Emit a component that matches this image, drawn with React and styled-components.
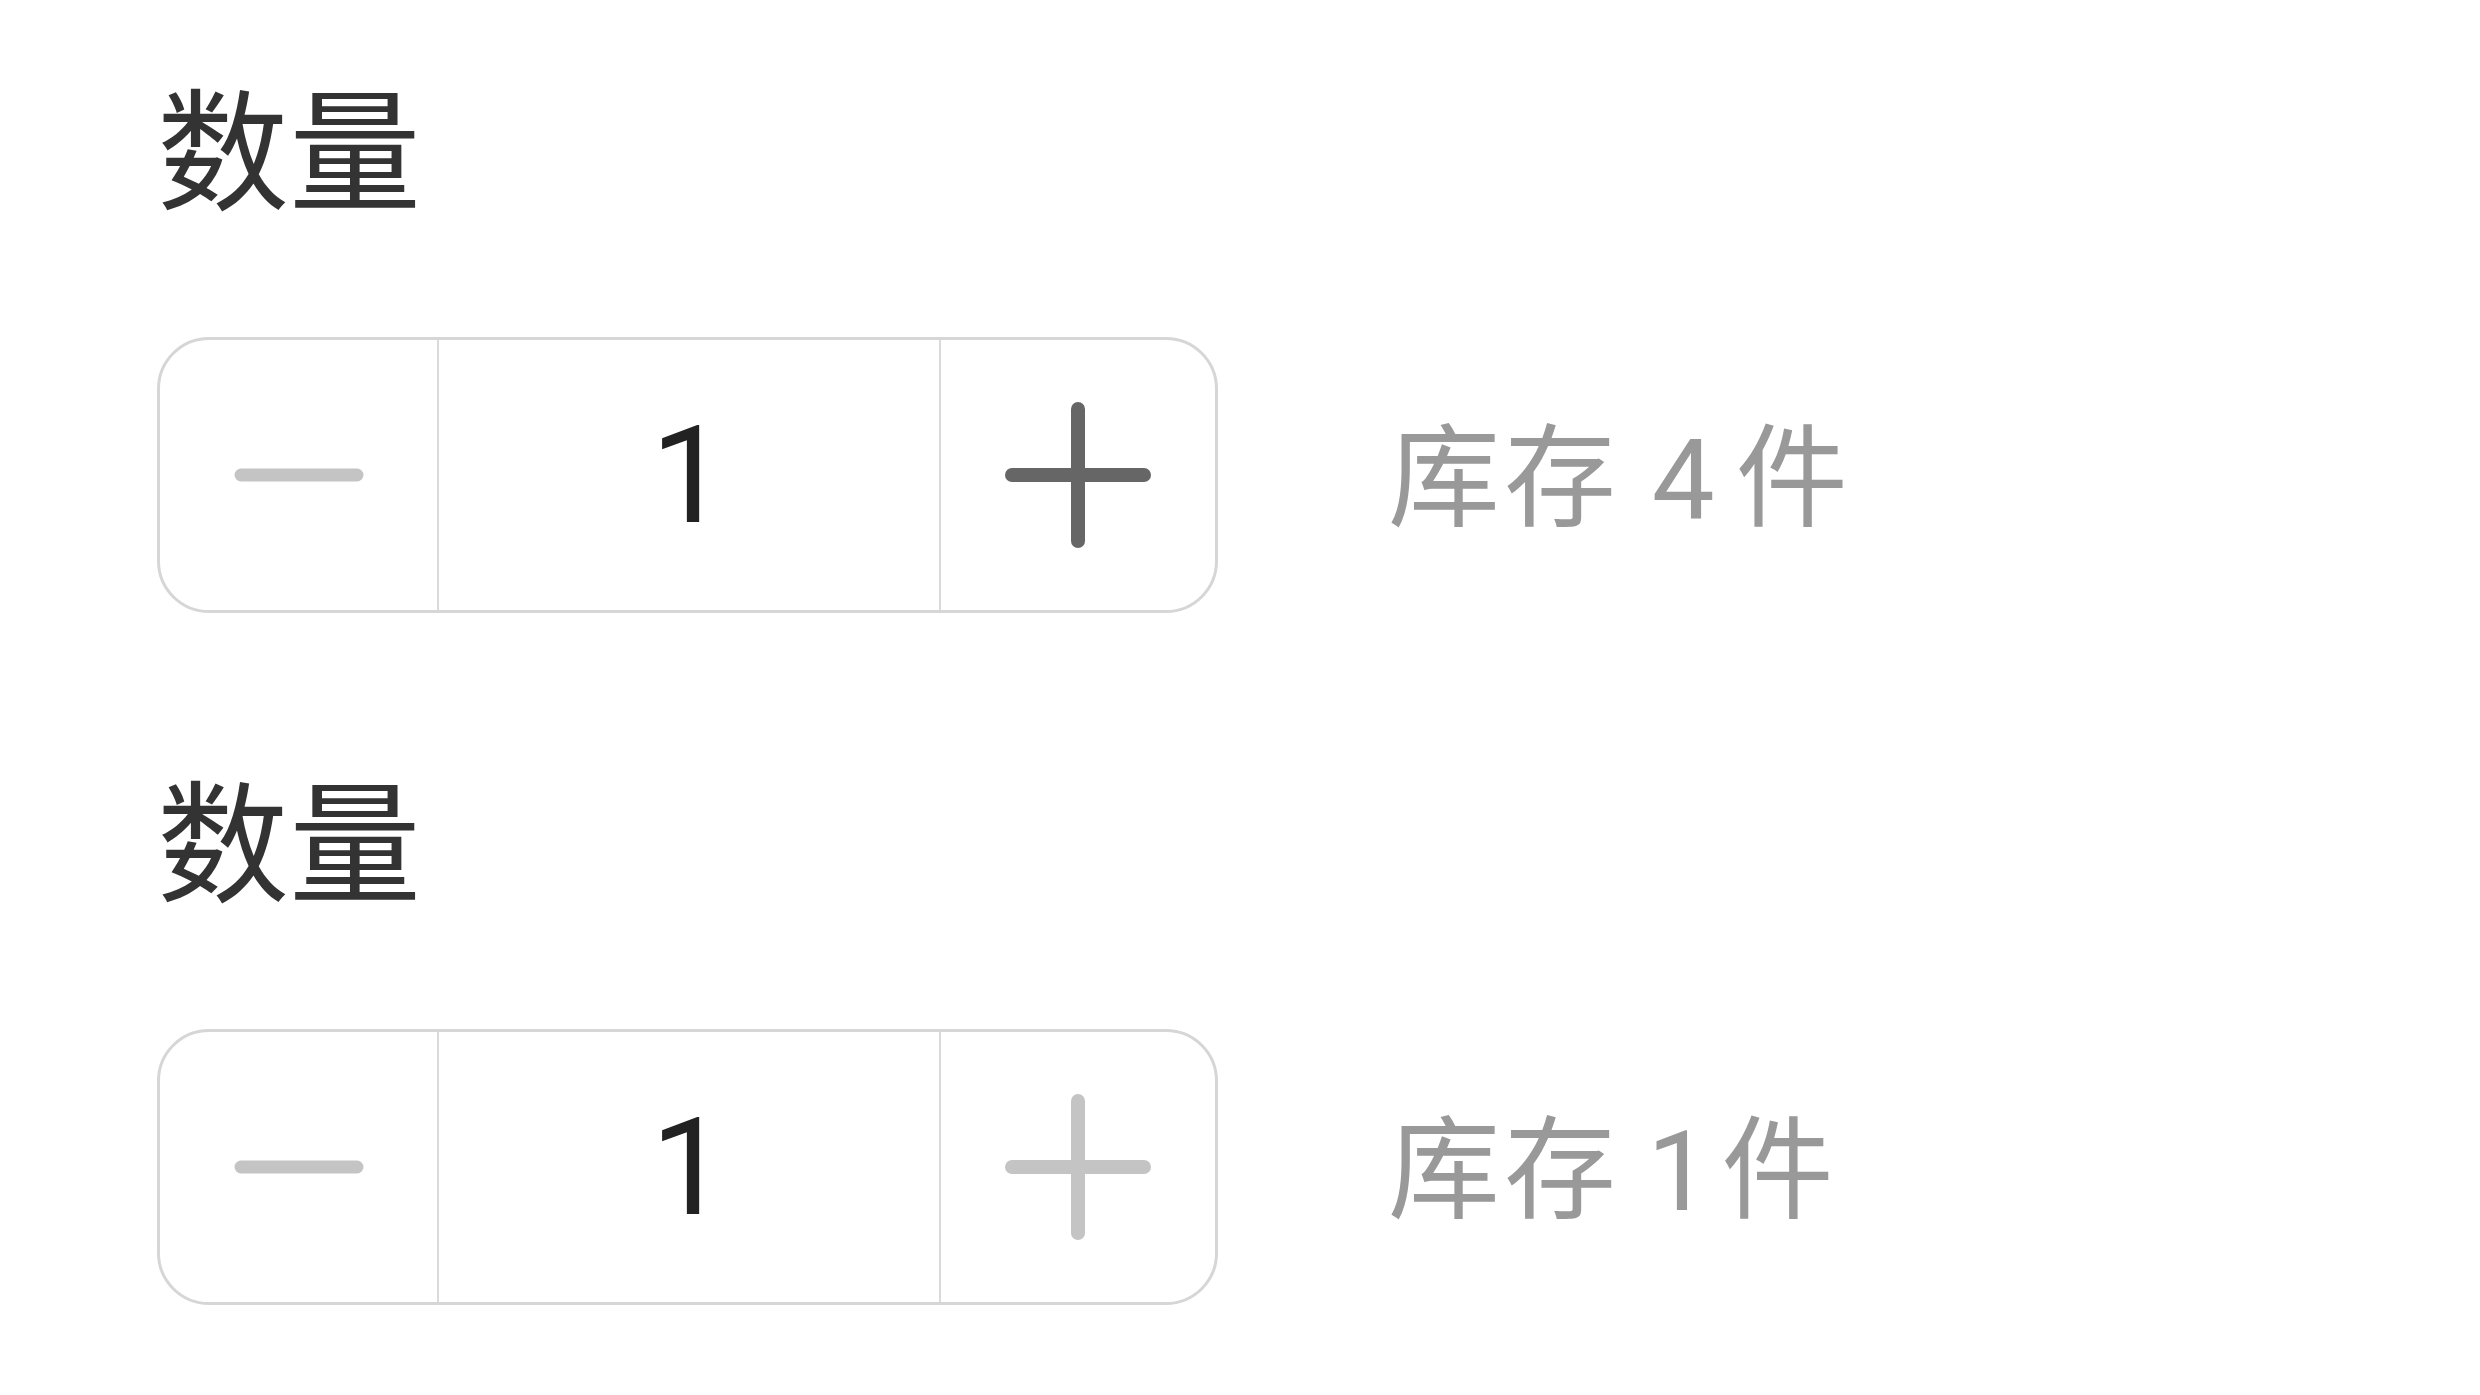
import React from "react";
import styled, { createGlobalStyle } from "styled-components";

const GlobalStyle = createGlobalStyle`
  html, body {
    margin: 0;
    padding: 0;
    background: #ffffff;
  }
  body {
    font-family: "Roboto", "Noto Sans CJK SC", sans-serif;
  }
`;

const Page = styled.div`
  display: flex;
  flex-direction: column;
  padding: 55px 0 0 157px;
`;

const Field = styled.section`
  display: flex;
  flex-direction: column;
  margin-bottom: 134px;
`;

const Label = styled.div`
  font-family: "Noto Sans CJK SC", sans-serif;
  font-size: 132px;
  line-height: 176px;
  color: #333333;
  margin-bottom: 106px;
`;

const Row = styled.div`
  display: flex;
  align-items: center;
  gap: 170px;
`;

const Stepper = styled.div`
  display: grid;
  grid-template-columns: 277px 1fr 274px;
  width: 1061px;
  height: 276px;
  box-sizing: border-box;
  border: 3px solid #d6d6d6;
  border-radius: 52px;
  overflow: hidden;
  background: #ffffff;
`;

const StepButton = styled.button`
  display: flex;
  align-items: center;
  justify-content: center;
  border: none;
  background: transparent;
  padding: 0;
  margin: 0;
  color: ${(p) => (p.$disabled ? "#c4c4c4" : "#666666")};
  cursor: ${(p) => (p.$disabled ? "not-allowed" : "pointer")};
`;

const Value = styled.div`
  display: flex;
  align-items: center;
  justify-content: center;
  border-left: 2px solid #dadada;
  border-right: 2px solid #dadada;
  font-family: "Roboto", sans-serif;
  font-size: 136px;
  color: #222222;
`;

const Stock = styled.div`
  font-family: "Roboto", "Noto Sans CJK SC", sans-serif;
  font-size: 112px;
  letter-spacing: 4px;
  font-variant-numeric: proportional-nums;
  color: #999999;
  white-space: pre;
  margin-bottom: 12px;
`;

const Count = styled.span`
  margin-right: 17px;
`;

const MinusIcon = () => (
  <svg width="140" height="140" viewBox="0 0 140 140">
    <line x1="12" y1="70" x2="128" y2="70" stroke="currentColor" strokeWidth="13" strokeLinecap="round" />
  </svg>
);

const PlusIcon = () => (
  <svg width="146" height="146" viewBox="0 0 146 146">
    <line x1="7" y1="73" x2="139" y2="73" stroke="currentColor" strokeWidth="14" strokeLinecap="round" />
    <line x1="73" y1="7" x2="73" y2="139" stroke="currentColor" strokeWidth="14" strokeLinecap="round" />
  </svg>
);

function QuantityField({ value, stock }) {
  const canDecrease = value > 1;
  const canIncrease = value < stock;
  return (
    <Field>
      <Label>数量</Label>
      <Row>
        <Stepper>
          <StepButton $disabled={!canDecrease} aria-label="减少">
            <MinusIcon />
          </StepButton>
          <Value>{value}</Value>
          <StepButton $disabled={!canIncrease} aria-label="增加">
            <PlusIcon />
          </StepButton>
        </Stepper>
        <Stock>
          {"库存 "}
          <Count>{stock}</Count>
          {"件"}
        </Stock>
      </Row>
    </Field>
  );
}

export default function App() {
  return (
    <>
      <GlobalStyle />
      <Page>
        <QuantityField value={1} stock={4} />
        <QuantityField value={1} stock={1} />
      </Page>
    </>
  );
}
